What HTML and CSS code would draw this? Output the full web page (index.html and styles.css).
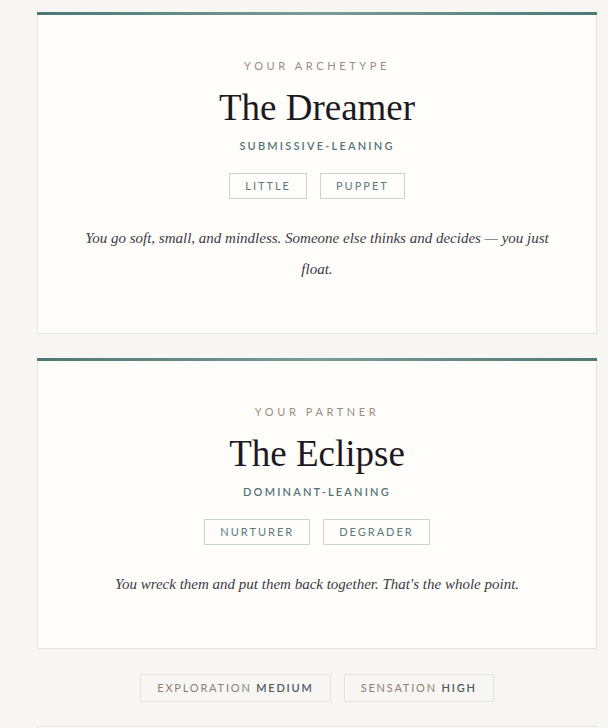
FILE: index.html
```html
<!DOCTYPE html>
<html>
<head>
<meta charset="utf-8">
<link rel="stylesheet" href="styles.css">
</head>
<body>
<main class="page">
  <section class="card">
    <p class="eyebrow">Your Archetype</p>
    <h1 class="title">The Dreamer</h1>
    <p class="leaning">Submissive-leaning</p>
    <div class="tags">
      <span class="tag">Little</span>
      <span class="tag">Puppet</span>
    </div>
    <p class="desc">You go soft, small, and mindless. Someone else thinks and decides — you just float.</p>
  </section>
  <section class="card">
    <p class="eyebrow">Your Partner</p>
    <h1 class="title">The Eclipse</h1>
    <p class="leaning">Dominant-leaning</p>
    <div class="tags">
      <span class="tag">Nurturer</span>
      <span class="tag">Degrader</span>
    </div>
    <p class="desc">You wreck them and put them back together. That's the whole point.</p>
  </section>
  <div class="stats">
    <span class="stat">Exploration <b>Medium</b></span>
    <span class="stat">Sensation <b>High</b></span>
  </div>
  <section class="card card-next"></section>
</main>
</body>
</html>
```
FILE: styles.css
```css
html, body {
  margin: 0;
  padding: 0;
  background: #f8f6f2;
}
.page {
  padding: 12px 11px 0 37px;
  display: flex;
  flex-direction: column;
  gap: 24px;
}
.card {
  background: #fefdfa;
  border: 1px solid #e7e3dd;
  border-top: none;
  position: relative;
  padding: 46px 40px 48px;
  text-align: center;
}
.card::before {
  content: "";
  position: absolute;
  left: -1px;
  right: -1px;
  top: 0;
  height: 3px;
  background: linear-gradient(90deg, #4e7773 0%, #7a9d98 50%, #4f7874 100%);
}
.card-next {
  padding: 0;
  height: 20px;
  border-top: 1px solid #e7e3dd;
}
.card-next::before { display: none; }
.eyebrow {
  margin: 0;
  font-family: Lato, "Liberation Sans", sans-serif;
  font-size: 11px;
  line-height: 16px;
  letter-spacing: 3.6px;
  text-transform: uppercase;
  color: #998e84;
}
.title {
  margin: 11px 0 0;
  font-family: "Liberation Serif", serif;
  font-weight: 400;
  font-size: 37px;
  line-height: 46px;
  color: #1d1922;
}
.leaning {
  margin: 7px 0 0;
  font-family: Lato, "Liberation Sans", sans-serif;
  font-size: 11px;
  font-weight: 600;
  line-height: 16px;
  letter-spacing: 2.2px;
  text-transform: uppercase;
  color: #557379;
}
.tags {
  margin-top: 19px;
  display: flex;
  justify-content: center;
  gap: 13px;
}
.tag {
  display: inline-block;
  height: 26px;
  box-sizing: border-box;
  padding: 0 15px;
  border: 1px solid #c6d6d3;
  font-family: Lato, "Liberation Sans", sans-serif;
  font-size: 11px;
  line-height: 24px;
  letter-spacing: 2px;
  text-transform: uppercase;
  color: #5c7a80;
}
.desc {
  margin: 24px 0 0;
  font-family: "Liberation Serif", serif;
  font-style: italic;
  font-size: 15px;
  line-height: 31px;
  color: #3d3a45;
}
.stats {
  display: flex;
  justify-content: center;
  gap: 13px;
  margin-top: 1px;
}
.stat {
  display: inline-block;
  height: 28px;
  box-sizing: border-box;
  padding: 0 16px;
  border: 1px solid #e6e2dc;
  background: #f8f6f2;
  font-family: Lato, "Liberation Sans", sans-serif;
  font-size: 11px;
  line-height: 26px;
  letter-spacing: 1.8px;
  text-transform: uppercase;
  color: #8b8178;
}
.stat b {
  font-weight: 600;
  color: #4c5c62;
}
```
